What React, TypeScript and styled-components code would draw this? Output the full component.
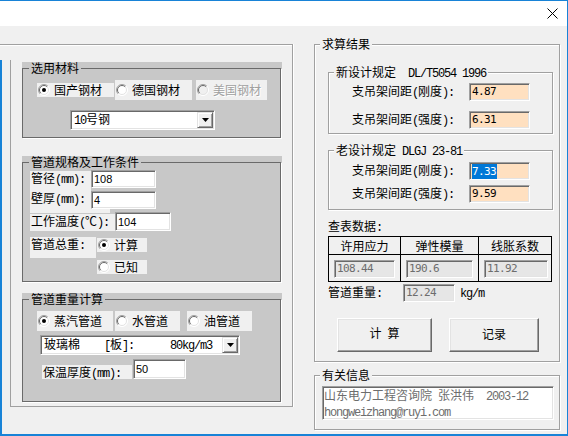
import React from 'react'
import styled, { createGlobalStyle } from 'styled-components'

const BLUE = '#1883d7'
const FACE = '#f0f0f0'
const PANEL = '#c8c8c8'

const GlobalStyle = createGlobalStyle`
  * { box-sizing: border-box; }
  html, body { margin: 0; padding: 0; background: #fff; }
  body {
    font-family: "Noto Sans CJK SC", "Liberation Sans", sans-serif;
    font-size: 12px;
    line-height: 14px;
    color: #000;
  }
`

// half-width latin, the way the old Song face draws it (6px a char)
const Half = styled.span`
  font-family: "Liberation Mono", monospace;
  font-size: 12px;
  letter-spacing: -1.2px;
  white-space: pre;
`

function Txt({ s }: { s: string }) {
  const parts = s.match(/[\x00-\x7f]+|[^\x00-\x7f]+/g) ?? []
  return (
    <>
      {parts.map((p, i) =>
        /^[\x00-\x7f]/.test(p) ? <Half key={i}>{p}</Half> : <React.Fragment key={i}>{p}</React.Fragment>
      )}
    </>
  )
}

const Window = styled.div`
  width: 568px;
  height: 436px;
  display: flex;
  flex-direction: column;
  border-top: 1px solid ${BLUE};
  border-right: 1px solid ${BLUE};
  border-bottom: 2px solid ${BLUE};
  background: #fff;
  overflow: hidden;
`

const TitleBar = styled.div`
  height: 25px;
  flex: none;
  display: flex;
  align-items: center;
  justify-content: flex-end;
  padding-right: 9px;
  background: #fff;
`

const Client = styled.div`
  flex: 1;
  display: flex;
  align-items: flex-start;
  background: linear-gradient(${BLUE}, ${BLUE}) 0 34px / 2px 100% no-repeat, ${FACE};
`

const OuterFrame = styled.div`
  flex: none;
  width: 293px;
  height: 363px;
  margin-top: 18px;
  padding: 15px 0 0 10px;
  border-top: 1px solid #a0a0a0;
  border-right: 1px solid #a0a0a0;
  box-shadow: inset 0 1px #fff, 1px 0 #fff;
`

const InnerFrame = styled.div`
  height: 347px;
  padding-left: 11px;
  border-left: 1px solid #a0a0a0;
  border-bottom: 1px solid #a0a0a0;
  display: flex;
  flex-direction: column;
`

const Panel = styled.div<{ $mt: number }>`
  width: 260px;
  margin-top: ${p => p.$mt}px;
  padding-top: 6px;
  background: ${PANEL};
`

const Frame = styled.div<{ $w: number; $h: number; $mt?: number; $ml?: number; $dark?: boolean }>`
  flex: none;
  width: ${p => p.$w}px;
  height: ${p => p.$h}px;
  margin-top: ${p => p.$mt ?? 0}px;
  margin-left: ${p => p.$ml ?? 0}px;
  border: 1px solid ${p => (p.$dark ? '#6a6a6a' : '#a0a0a0')};
  box-shadow: ${p => (p.$dark ? '1px 1px #fff' : 'inset 1px 1px #fff, 1px 1px #fff')};
  display: flex;
  flex-direction: column;
  align-items: flex-start;
`

const Legend = styled.div<{ $bg: string; $ml?: number }>`
  flex: none;
  height: 12px;
  line-height: 12px;
  margin: -7px 0 0 ${p => p.$ml ?? 5}px;
  padding: 0 2px;
  background: ${p => p.$bg};
  white-space: pre;
`

const Row = styled.div<{ $mt: number; $ml: number; $align?: string }>`
  display: flex;
  align-items: ${p => p.$align ?? 'flex-start'};
  margin-top: ${p => p.$mt}px;
  margin-left: ${p => p.$ml}px;
`

const RadioItem = styled.div<{ $w: number; $h: number; $ml?: number; $off?: boolean }>`
  flex: none;
  width: ${p => p.$w}px;
  height: ${p => p.$h}px;
  margin-left: ${p => p.$ml ?? 0}px;
  padding-left: 1px;
  display: flex;
  align-items: center;
  gap: 4px;
  background: ${FACE};
  color: ${p => (p.$off ? '#a0a0a0' : '#000')};
  text-shadow: ${p => (p.$off ? '1px 1px #fff' : 'none')};
  white-space: nowrap;
  line-height: 14px;
`

const RadioColumn = styled.div`
  display: flex;
  flex-direction: column;
  gap: 8px;
  margin: 1px 0 0 1px;
`

const FieldLabel = styled.div<{ $w: number; $h: number; $mt?: number }>`
  flex: none;
  width: ${p => p.$w}px;
  height: ${p => p.$h}px;
  margin-top: ${p => p.$mt ?? 0}px;
  padding-left: 1px;
  background: ${FACE};
  line-height: 14px;
  white-space: nowrap;
`

type Tone = 'white' | 'peach' | 'off'

const Edit = styled.div<{ $w: number; $h: number; $tone?: Tone; $ml?: number; $mt?: number }>`
  flex: none;
  width: ${p => p.$w}px;
  height: ${p => p.$h}px;
  margin-left: ${p => p.$ml ?? 0}px;
  margin-top: ${p => p.$mt ?? 0}px;
  display: flex;
  align-items: center;
  padding-left: 2px;
  border: 1px solid;
  border-color: #a0a0a0 #fff #fff #a0a0a0;
  box-shadow: inset 1px 1px #696969, inset -1px -1px #e3e3e3;
  background: ${p => (p.$tone === 'peach' ? '#ffe0c0' : p.$tone === 'off' ? '#e6e6e6' : '#fff')};
  color: ${p => (p.$tone === 'off' ? '#6d6d6d' : '#000')};
  font-family: ${p =>
    !p.$tone || p.$tone === 'white' ? '"Liberation Sans", sans-serif' : '"DejaVu Sans Mono", monospace'};
  font-size: 11px;
  letter-spacing: ${p => (!p.$tone || p.$tone === 'white' ? '0' : '-0.6px')};
  white-space: pre;
  overflow: hidden;
`

const Selected = styled.span`
  display: inline-block;
  line-height: 15px;
  background: #0078d7;
  color: #fff;
  padding-right: 1px;
`

const Combo = styled.div<{ $w: number; $mt: number; $ml: number }>`
  flex: none;
  width: ${p => p.$w}px;
  height: 20px;
  margin-top: ${p => p.$mt}px;
  margin-left: ${p => p.$ml}px;
  padding: 1px;
  display: flex;
  align-items: center;
  border: 1px solid;
  border-color: #a0a0a0 #fff #fff #a0a0a0;
  box-shadow: inset 1px 1px #696969, inset -1px -1px #e3e3e3;
  background: #fff;
`

const ComboText = styled.div`
  flex: 1;
  padding-left: 2px;
  white-space: pre;
  line-height: 14px;
`

const DropButton = styled.div`
  flex: none;
  width: 16px;
  height: 16px;
  display: flex;
  align-items: center;
  justify-content: center;
  background: ${FACE};
  border: 1px solid;
  border-color: #e3e3e3 #696969 #696969 #e3e3e3;
  box-shadow: inset 1px 1px #fff, inset -1px -1px #a0a0a0;
`

const RightCol = styled.div`
  flex: none;
  width: 246px;
  margin-left: 21px;
  display: flex;
  flex-direction: column;
`

const ResultRow = styled.div<{ $mt: number }>`
  display: flex;
  align-items: center;
  height: 18px;
  margin-top: ${p => p.$mt}px;
  padding-left: 23px;
`

const ResultLabel = styled.div<{ $w?: number }>`
  flex: none;
  width: ${p => p.$w ?? 117}px;
  white-space: nowrap;
  line-height: 14px;
`

const Caption = styled.div<{ $mt: number }>`
  margin: ${p => p.$mt}px 0 0 13px;
  line-height: 12px;
  height: 12px;
  white-space: nowrap;
`

const Table = styled.div`
  flex: none;
  width: 224px;
  margin: 4px 0 0 13px;
  display: grid;
  grid-template-columns: 71px 77px 72px;
  grid-template-rows: 17px 26px;
  gap: 1px;
  background: #000;
  border: 1px solid #000;
`

const HeadCell = styled.div`
  background: ${FACE};
  display: flex;
  align-items: center;
  justify-content: center;
  line-height: 14px;
`

const DataCell = styled.div`
  background: ${FACE};
  padding: 5px 0 0 5px;
`

const WeightRow = styled.div`
  display: flex;
  align-items: center;
  height: 18px;
  margin: 2px 0 0 13px;
`

const Unit = styled.div`
  margin-left: 5px;
`

const ButtonRow = styled.div`
  display: flex;
  gap: 17px;
  margin: 16px 0 0 22px;
`

const Button = styled.button<{ $w: number }>`
  width: ${p => p.$w}px;
  height: 34px;
  padding: 0 0 2px;
  background: ${FACE};
  border: 1px solid;
  border-color: #fff #696969 #696969 #fff;
  box-shadow: inset -1px -1px #a0a0a0, inset 1px 1px #e3e3e3;
  font: 12px/14px "Noto Sans CJK SC", sans-serif;
  color: #000;
`

const InfoBox = styled.div`
  width: 232px;
  height: 34px;
  margin: 5px 0 0 7px;
  padding: 1px 0 0 1px;
  background: #fff;
  border: 1px solid;
  border-color: #a0a0a0 #fff #fff #a0a0a0;
  box-shadow: inset 1px 1px #696969, inset -1px -1px #e3e3e3;
  color: #6d6d6d;
  line-height: 13px;
  white-space: pre;
`

function RadioMark({ on = false, off = false }: { on?: boolean; off?: boolean }) {
  return (
    <svg width="12" height="12" viewBox="0 0 12 12" style={{ flex: 'none' }}>
      <circle cx="6" cy="6" r="5.5" fill={off ? FACE : '#fff'} />
      <path d="M9.9 2.1 A5.5 5.5 0 0 0 2.1 9.9" stroke="#a0a0a0" fill="none" />
      <path d="M9.2 2.8 A4.5 4.5 0 0 0 2.8 9.2" stroke="#696969" fill="none" />
      <path d="M2.1 9.9 A5.5 5.5 0 0 0 9.9 2.1" stroke="#fff" fill="none" />
      <path d="M2.8 9.2 A4.5 4.5 0 0 0 9.2 2.8" stroke="#e3e3e3" fill="none" />
      {on && <circle cx="6" cy="6" r="2" fill="#000" />}
    </svg>
  )
}

function Arrow() {
  return (
    <svg width="7" height="4" viewBox="0 0 7 4">
      <path d="M0 0h7L3.5 4z" fill="#000" />
    </svg>
  )
}

export default function App() {
  return (
    <>
      <GlobalStyle />
      <Window>
        <TitleBar>
          <svg width="11" height="11" viewBox="0 0 11 11">
            <path d="M0.5 0.5L10.5 10.5M10.5 0.5L0.5 10.5" stroke="#000" strokeWidth="1" />
          </svg>
        </TitleBar>
        <Client>
          <OuterFrame>
            <InnerFrame>
              <Panel $mt={2}>
                <Frame $w={259} $h={70} $dark>
                  <Legend $bg={PANEL} $ml={6}>选用材料</Legend>
                  <Row $mt={6} $ml={14} $align="center">
                    <RadioItem $w={77} $h={14}><RadioMark on />国产钢材</RadioItem>
                    <RadioItem $w={77} $h={20} $ml={1}><RadioMark />德国钢材</RadioItem>
                    <RadioItem $w={71} $h={20} $ml={4} $off><RadioMark off />美国钢材</RadioItem>
                  </Row>
                  <Combo $w={145} $mt={10} $ml={47}>
                    <ComboText><Txt s="10号钢" /></ComboText>
                    <DropButton><Arrow /></DropButton>
                  </Combo>
                </Frame>
              </Panel>

              <Panel $mt={18}>
                <Frame $w={259} $h={120} $dark>
                  <Legend $bg={PANEL} $ml={6}>管道规格及工作条件</Legend>
                  <Row $mt={2} $ml={7}>
                    <FieldLabel $w={61} $h={20} $mt={1}><Txt s="管径(mm):" /></FieldLabel>
                    <Edit $w={65} $h={18}>108</Edit>
                  </Row>
                  <Row $mt={0} $ml={7}>
                    <FieldLabel $w={80} $h={22}><Txt s="壁厚(mm):" /></FieldLabel>
                    <Edit $w={65} $h={18} $ml={-19}>4</Edit>
                  </Row>
                  <Row $mt={-1} $ml={7}>
                    <FieldLabel $w={85} $h={17} $mt={2}><Txt s="工作温度(℃):" /></FieldLabel>
                    <Edit $w={56} $h={19}>104</Edit>
                  </Row>
                  <Row $mt={6} $ml={7}>
                    <FieldLabel $w={66} $h={21}><Txt s="管道总重:" /></FieldLabel>
                    <RadioColumn>
                      <RadioItem $w={50} $h={14}><RadioMark on />计算</RadioItem>
                      <RadioItem $w={50} $h={14}><RadioMark />已知</RadioItem>
                    </RadioColumn>
                  </Row>
                </Frame>
              </Panel>

              <Panel $mt={11}>
                <Frame $w={259} $h={103} $dark>
                  <Legend $bg={PANEL} $ml={6}>管道重量计算</Legend>
                  <Row $mt={6} $ml={14} $align="center">
                    <RadioItem $w={76} $h={20}><RadioMark on />蒸汽管道</RadioItem>
                    <RadioItem $w={65} $h={20} $ml={2}><RadioMark />水管道</RadioItem>
                    <RadioItem $w={65} $h={20} $ml={7}><RadioMark />油管道</RadioItem>
                  </Row>
                  <Combo $w={200} $mt={4} $ml={17}>
                    <ComboText>
                      玻璃棉<Half>{'    ['}</Half>板<Half>{']:      80kg/m3'}</Half>
                    </ComboText>
                    <DropButton><Arrow /></DropButton>
                  </Combo>
                  <Row $mt={4} $ml={19}>
                    <FieldLabel $w={90} $h={14} $mt={6}><Txt s="保温厚度(mm):" /></FieldLabel>
                    <Edit $w={53} $h={20} $ml={1}>50</Edit>
                  </Row>
                </Frame>
              </Panel>
            </InnerFrame>
          </OuterFrame>

          <RightCol>
            <Frame $w={246} $h={318} $mt={18}>
              <Legend $bg={FACE}>求算结果</Legend>

              <Frame $w={225} $h={62} $mt={22} $ml={13}>
                <Legend $bg={FACE}><Txt s="新设计规定  DL/T5054 1996" /></Legend>
                <ResultRow $mt={5}>
                  <ResultLabel><Txt s="支吊架间距(刚度):" /></ResultLabel>
                  <Edit $w={61} $h={18} $tone="peach">4.87</Edit>
                </ResultRow>
                <ResultRow $mt={10}>
                  <ResultLabel><Txt s="支吊架间距(强度):" /></ResultLabel>
                  <Edit $w={61} $h={18} $tone="peach">6.31</Edit>
                </ResultRow>
              </Frame>

              <Frame $w={225} $h={60} $mt={16} $ml={13}>
                <Legend $bg={FACE}><Txt s="老设计规定 DLGJ 23-81" /></Legend>
                <ResultRow $mt={6}>
                  <ResultLabel><Txt s="支吊架间距(刚度):" /></ResultLabel>
                  <Edit $w={61} $h={18} $tone="peach"><Selected>7.33</Selected></Edit>
                </ResultRow>
                <ResultRow $mt={5}>
                  <ResultLabel><Txt s="支吊架间距(强度):" /></ResultLabel>
                  <Edit $w={61} $h={18} $tone="peach">9.59</Edit>
                </ResultRow>
              </Frame>

              <Caption $mt={10}><Txt s="查表数据:" /></Caption>
              <Table>
                <HeadCell>许用应力</HeadCell>
                <HeadCell>弹性模量</HeadCell>
                <HeadCell>线胀系数</HeadCell>
                <DataCell><Edit $w={61} $h={18} $tone="off">108.44</Edit></DataCell>
                <DataCell><Edit $w={67} $h={18} $tone="off">190.6</Edit></DataCell>
                <DataCell><Edit $w={64} $h={18} $tone="off">11.92</Edit></DataCell>
              </Table>

              <WeightRow>
                <ResultLabel $w={75}><Txt s="管道重量:" /></ResultLabel>
                <Edit $w={52} $h={18} $tone="off">12.24</Edit>
                <Unit><Half>kg/m</Half></Unit>
              </WeightRow>

              <ButtonRow>
                <Button $w={95}>计<Half> </Half>算</Button>
                <Button $w={90}>记录</Button>
              </ButtonRow>
            </Frame>

            <Frame $w={246} $h={55} $mt={13}>
              <Legend $bg={FACE}>有关信息</Legend>
              <InfoBox>
                山东电力工程咨询院<Half> </Half>张洪伟<Half>{'  2003-12'}</Half>
                {'\n'}
                <Half>hongweizhang@ruyi.com</Half>
              </InfoBox>
            </Frame>
          </RightCol>
        </Client>
      </Window>
    </>
  )
}
